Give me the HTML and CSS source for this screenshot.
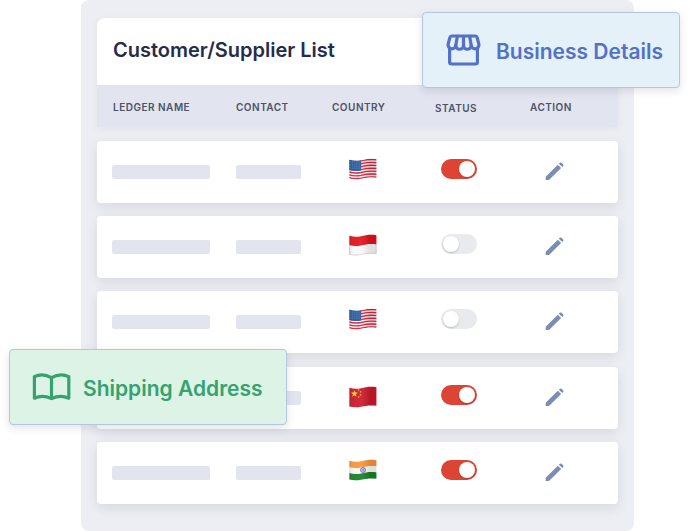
FILE: index.html
```html
<!DOCTYPE html>
<html>
<head>
  <meta charset="utf-8">
  <title>Customer/Supplier List</title>
  <link rel="stylesheet" href="styles.css">
</head>
<body>

<!-- Shared icons and flags -->
<svg class="sprite" width="0" height="0">
  <defs>
    <clipPath id="wave">
      <path d="M0.4 1.7 C4 3 8 3.1 12 2.3 C17 1.1 21 .3 27.4 1.2 V19.8 C21 18.9 17 19.7 12 20.8 C8 21.6 4 21.5 .4 20.5 Z"/>
    </clipPath>
    <linearGradient id="shade" x1="0" x2="1" y1="0" y2="0">
      <stop offset="0" stop-color="#000" stop-opacity=".14"/>
      <stop offset=".15" stop-color="#fff" stop-opacity=".05"/>
      <stop offset=".45" stop-color="#fff" stop-opacity=".08"/>
      <stop offset=".75" stop-color="#000" stop-opacity=".1"/>
      <stop offset="1" stop-color="#000" stop-opacity=".1"/>
    </linearGradient>
  </defs>
  <symbol id="flag-us" viewBox="0 0 28 22">
    <g clip-path="url(#wave)">
      <rect width="28" height="22" fill="#f6eff1"/>
      <g fill="none" stroke="#d8243c" stroke-width="1.4">
        <path d="M0 2.3 C4 3.6 8 3.7 12 2.9 C17 1.7 21 .9 28 1.8"/>
        <path d="M0 5.2 C4 6.5 8 6.6 12 5.8 C17 4.6 21 3.8 28 4.7"/>
        <path d="M0 8.1 C4 9.4 8 9.5 12 8.7 C17 7.5 21 6.7 28 7.6"/>
        <path d="M0 11 C4 12.3 8 12.4 12 11.6 C17 10.4 21 9.6 28 10.5"/>
        <path d="M0 13.9 C4 15.2 8 15.3 12 14.5 C17 13.3 21 12.5 28 13.4"/>
        <path d="M0 16.8 C4 18.1 8 18.2 12 17.4 C17 16.2 21 15.4 28 16.3"/>
        <path d="M0 19.7 C4 21 8 21.1 12 20.3 C17 19.1 21 18.3 28 19.2"/>
      </g>
      <path d="M0 0 H12.2 V12.4 C8 13.3 4 13.2 0 12 Z" fill="#1f5a9e"/>
      <path d="M1.5 4.2 H12 M1.5 6.2 H12 M1.5 8.2 H12 M1.5 10.2 H12" stroke="#88a5cb" stroke-width=".6" stroke-dasharray=".7 1.1"/>
      <rect width="28" height="22" fill="url(#shade)"/>
    </g>
  </symbol>
  <symbol id="flag-id" viewBox="0 0 28 22">
    <g clip-path="url(#wave)">
      <rect width="28" height="22" fill="#f8f8f8"/>
      <path d="M0 0 H28 V10.4 C21 9.5 17 10.3 12 11.5 C8 12.3 4 12.2 0 11.1 Z" fill="#e0131c"/>
      <rect width="28" height="22" fill="url(#shade)"/>
    </g>
    <path d="M.6 1.8 V20.4 C4 21.3 8 21.3 12 20.5 C17 19.4 21 18.7 27.2 19.6 V11" fill="none" stroke="#777" stroke-opacity=".5" stroke-width=".5"/>
  </symbol>
  <symbol id="flag-cn" viewBox="0 0 28 22">
    <g clip-path="url(#wave)">
      <rect width="28" height="22" fill="#cb1a2c"/>
      <path d="M5.4 4.2 L6.3 6.6 L8.8 6.6 L6.8 8.2 L7.6 10.7 L5.4 9.2 L3.2 10.7 L4 8.2 L2 6.6 L4.5 6.6 Z" fill="#fbd51e"/>
      <g fill="#ee9a2c">
        <circle cx="9.6" cy="3.9" r=".8"/>
        <circle cx="11.5" cy="5.9" r=".8"/>
        <circle cx="11.5" cy="8.9" r=".8"/>
        <circle cx="9.6" cy="11.1" r=".8"/>
      </g>
      <rect width="28" height="22" fill="url(#shade)"/>
    </g>
  </symbol>
  <symbol id="flag-in" viewBox="0 0 28 22">
    <g clip-path="url(#wave)">
      <rect width="28" height="22" fill="#f8f7f5"/>
      <path d="M0 0 H28 V7.3 C21 6.4 17 7.2 12 8.4 C8 9.2 4 9.1 0 8 Z" fill="#f5953c"/>
      <path d="M0 14 C4 15.3 8 15.4 12 14.6 C17 13.4 21 12.6 28 13.5 V22 H0 Z" fill="#178127"/>
      <circle cx="14" cy="11" r="2.4" fill="#c9cbe6" stroke="#5559ab" stroke-width=".9"/>
      <circle cx="14" cy="11" r=".7" fill="#4549a2"/>
      <rect width="28" height="22" fill="url(#shade)"/>
    </g>
  </symbol>
  <symbol id="pencil" viewBox="0 0 20 20">
    <path d="M.7 14.7 L12.8 2.8 L16.1 6.1 L4 18 H.7 Z M13.9 1.7 L14.8 .8 Q15.7 0 16.6 .8 L18.2 2.4 Q19 3.3 18.2 4.1 L17.2 5 Z" fill="#7b8db3"/>
  </symbol>
</svg>

<div class="panel">
  <div class="card header">
    <h1>Customer/Supplier List</h1>
    <div class="columns labels">
      <span>LEDGER NAME</span>
      <span>CONTACT</span>
      <span class="country">COUNTRY</span>
      <span class="status">STATUS</span>
      <span class="action">ACTION</span>
    </div>
  </div>

  <div class="rows">
    <div class="card columns row">
      <span class="bar ledger"></span>
      <span class="bar contact"></span>
      <svg class="flag"><use href="#flag-us"/></svg>
      <span class="toggle on"></span>
      <svg class="edit"><use href="#pencil"/></svg>
    </div>
    <div class="card columns row">
      <span class="bar ledger"></span>
      <span class="bar contact"></span>
      <svg class="flag low"><use href="#flag-id"/></svg>
      <span class="toggle"></span>
      <svg class="edit"><use href="#pencil"/></svg>
    </div>
    <div class="card columns row">
      <span class="bar ledger"></span>
      <span class="bar contact"></span>
      <svg class="flag"><use href="#flag-us"/></svg>
      <span class="toggle"></span>
      <svg class="edit"><use href="#pencil"/></svg>
    </div>
    <div class="card columns row">
      <span class="bar ledger"></span>
      <span class="bar contact"></span>
      <svg class="flag lower"><use href="#flag-cn"/></svg>
      <span class="toggle on"></span>
      <svg class="edit"><use href="#pencil"/></svg>
    </div>
    <div class="card columns row">
      <span class="bar ledger"></span>
      <span class="bar contact"></span>
      <svg class="flag"><use href="#flag-in"/></svg>
      <span class="toggle on"></span>
      <svg class="edit"><use href="#pencil"/></svg>
    </div>
  </div>
</div>

<div class="callout business">
  <svg width="36" height="34" viewBox="0 0 36 34" fill="none" stroke="#5371c8" stroke-width="3.2" stroke-linejoin="round" stroke-linecap="round">
    <path d="M3.6 15 V29 Q3.6 31 5.6 31 H29.4 Q31.4 31 31.4 29 V15"/>
    <path d="M5.7 3 H29.3 Q30.7 3 31.1 4.4 L32.9 11.4 A3.8 3.8 0 0 1 25.2 12.4 A3.8 3.8 0 0 1 17.5 12.4 A3.8 3.8 0 0 1 9.8 12.4 A3.8 3.8 0 0 1 2.1 11.4 L3.9 4.4 Q4.3 3 5.7 3 Z"/>
    <path d="M11.3 3.4 L9.8 12.4 M17.5 3.4 V12.4 M23.7 3.4 L25.2 12.4"/>
  </svg>
  <span>Business Details</span>
</div>

<div class="callout shipping">
  <svg width="40" height="30" viewBox="0 0 40 30" fill="none" stroke="#36a270" stroke-width="3.2" stroke-linejoin="round">
    <path d="M19.5 5.6 Q10.5 .6 2.4 4.6 V26.2 Q10.5 22.4 19.5 26.6 Q28.5 22.4 36.8 26.2 V4.6 Q28.5 .6 19.5 5.6 Z"/>
    <path d="M19.5 5.6 V26.6"/>
  </svg>
  <span>Shipping Address</span>
</div>

</body>
</html>
```
FILE: styles.css
```css
* {
  box-sizing: border-box;
}

body {
  margin: 0;
  height: 531px;
  overflow: hidden;
  position: relative;
  background: white;
  font-family: Inter, "Liberation Sans", sans-serif;
  font-optical-sizing: none;
}

.sprite {
  position: absolute;
}

.panel {
  width: 553px;
  height: 531px;
  margin-left: 81px;
  padding: 18px 16px 0;
  background: #edeef3;
  border-radius: 8px;
}

.card {
  background: white;
  border-radius: 4px;
  box-shadow: 0 4px 12px rgba(40, 45, 70, .11);
}

/* Title and column labels */
.header {
  height: 109px;
  border-radius: 8px 8px 0 0;
  box-shadow: 0 2px 9px rgba(40, 45, 70, .05);
}

h1 {
  margin: 0;
  height: 67px;
  padding-left: 16px;
  line-height: 64px;
  font-size: 20px;
  font-weight: 600;
  color: #272b4a;
}

.columns {
  display: grid;
  grid-template-columns: 124px 113px 92px 104px 1fr;
  padding-left: 15px;
}

.labels {
  height: 42px;
  padding-left: 16px;
  background: #e2e4f0;
  color: #4a5367;
  font-size: 10px;
  line-height: 44px;
  font-weight: 600;
  letter-spacing: .5px;
}

.labels span {
  margin-left: -1px;
}

.labels span:first-child {
  margin-left: 0;
}

.labels .country {
  margin-left: -18px;
}

.labels .status {
  margin-left: -7px;
  padding-top: 1px;
}

.labels .action {
  margin-left: -16px;
}

/* List */
.rows {
  display: grid;
  gap: 13.2px;
  margin-top: 14px;
}

.row {
  height: 62px;
  align-items: start;
}

.bar {
  height: 14px;
  margin-top: 24px;
  border-radius: 2px;
  background: #e2e4f0;
}

.ledger {
  width: 98px;
}

.contact {
  width: 65px;
}

.flag {
  width: 28px;
  height: 22px;
  margin-top: 17px;
}

.low {
  margin-top: 18px;
}

.lower {
  margin-top: 19px;
}

.toggle {
  width: 36px;
  height: 20px;
  margin-top: 18px;
  padding: 2px;
  border-radius: 10px;
  background: #e9eaee;
}

.toggle::before {
  content: "";
  display: block;
  width: 16px;
  height: 16px;
  border-radius: 50%;
  background: white;
  box-shadow: 0 1px 2px rgba(0, 0, 0, .2);
}

.toggle.on {
  background: #de4433;
}

.toggle.on::before {
  margin-left: 16px;
}

.edit {
  width: 20px;
  height: 20px;
  margin-top: 21px;
}

/* Floating callouts */
.callout {
  position: absolute;
  display: flex;
  align-items: center;
  height: 76px;
  border: 1px solid #b6c6e2;
  border-radius: 4px;
  box-shadow: 0 3px 8px rgba(40, 45, 70, .13);
  font-size: 21px;
  font-weight: 600;
  white-space: nowrap;
}

.callout span {
  padding-top: 2px;
}

.business {
  left: 422px;
  top: 12px;
  width: 258px;
  padding-left: 23px;
  gap: 14px;
  background: #e4f1f8;
  color: #5371c8;
}

.shipping {
  left: 9px;
  top: 349px;
  width: 278px;
  padding-left: 22px;
  gap: 11px;
  background: #dcf3e6;
  color: #36a270;
}
```
